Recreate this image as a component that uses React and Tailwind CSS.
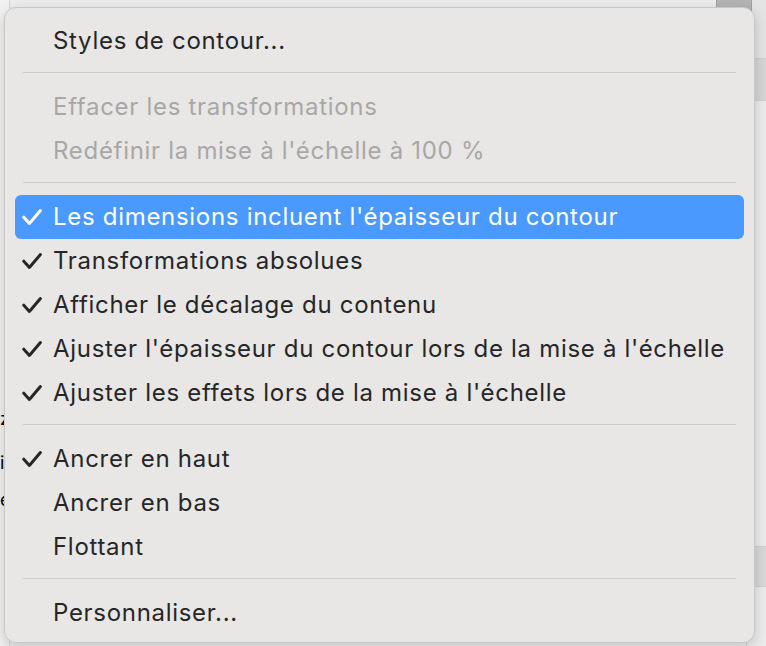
import React from 'react';

const Check = ({ white }) => (
  <svg width="20" height="16" viewBox="0 0 20 16" fill="none" className="shrink-0">
    <path
      d="M1.8 8.2 L7.4 14.4 L18.4 1.6"
      stroke={white ? '#ffffff' : '#262626'}
      strokeWidth="3"
      strokeLinecap="round"
      strokeLinejoin="round"
    />
  </svg>
);

const Item = ({ label, checked, disabled, active }) => (
  <div
    className={`flex items-center h-[44px] mx-[10px] rounded-[6px] ${
      active ? 'bg-[#4a99ff] text-white' : disabled ? 'text-[#a8a7a6]' : 'text-[#262626]'
    }`}
  >
    <div className="w-[38px] pl-[7px] flex items-center">
      {checked && <Check white={active} />}
    </div>
    <span className="whitespace-nowrap">{label}</span>
  </div>
);

const Separator = () => (
  <div className="h-[22px] pt-[9px] px-[18px]">
    <div className="h-px w-full bg-[#cfcecd]" />
  </div>
);

export default function App() {
  return (
    <div className="relative w-[766px] h-[646px] overflow-hidden bg-[#ededed]">
      {/* background content behind menu */}
      <div className="flex h-full">
        <div className="w-[10px] h-full bg-[#f2f2f2] border-r border-[#d6d6d6]" />
        <div className="flex-1" />
        <div className="w-[20px] h-full flex flex-col bg-[#e9e9e9] border-l border-[#d4d4d4]">
          <div className="h-[58px] bg-[#e4e4e4]" />
          <div className="h-[42px] border-t border-[#d0d0d0] bg-[#d6d6d6]" />
          <div className="flex-1 border-t border-[#d0d0d0] bg-[#ececec]" />
          <div className="h-[40px] border-t border-[#cfcfcf] bg-[#d9d9d9]" />
          <div className="h-[60px] border-t border-[#cfcfcf] bg-[#ececec]" />
        </div>
      </div>
      <div className="absolute right-[14px] -top-[10px] w-[36px] h-[55px] rounded-[6px] bg-[#b4b4b4] border border-[#a0a0a0]" />
      <div className="absolute left-0 top-[405px] text-[18px] text-black" style={{ fontFamily: 'Inter, sans-serif' }}>z</div>
      <div className="absolute left-0 top-[449px] text-[18px] text-black" style={{ fontFamily: 'Inter, sans-serif' }}>i</div>
      <div className="absolute left-0 top-[486px] text-[18px] text-black" style={{ fontFamily: 'Inter, sans-serif' }}>e</div>

      {/* the context menu */}
      <div
        className="absolute left-[4px] top-[7px] w-[751px] h-[636px] rounded-[12px] bg-[#e8e7e6] border border-[#c9c8c7] shadow-[0_4px_14px_rgba(0,0,0,0.18)] pt-[11px] text-[24px] tracking-[0.7px]"
        style={{ fontFamily: 'Inter, "Noto Sans", sans-serif' }}
      >
        <Item label="Styles de contour..." />
        <Separator />
        <Item label="Effacer les transformations" disabled />
        <Item label="Redéfinir la mise à l'échelle à 100 %" disabled />
        <Separator />
        <Item label="Les dimensions incluent l'épaisseur du contour" checked active />
        <Item label="Transformations absolues" checked />
        <Item label="Afficher le décalage du contenu" checked />
        <Item label="Ajuster l'épaisseur du contour lors de la mise à l'échelle" checked />
        <Item label="Ajuster les effets lors de la mise à l'échelle" checked />
        <Separator />
        <Item label="Ancrer en haut" checked />
        <Item label="Ancrer en bas" />
        <Item label="Flottant" />
        <Separator />
        <Item label="Personnaliser..." />
      </div>
    </div>
  );
}
